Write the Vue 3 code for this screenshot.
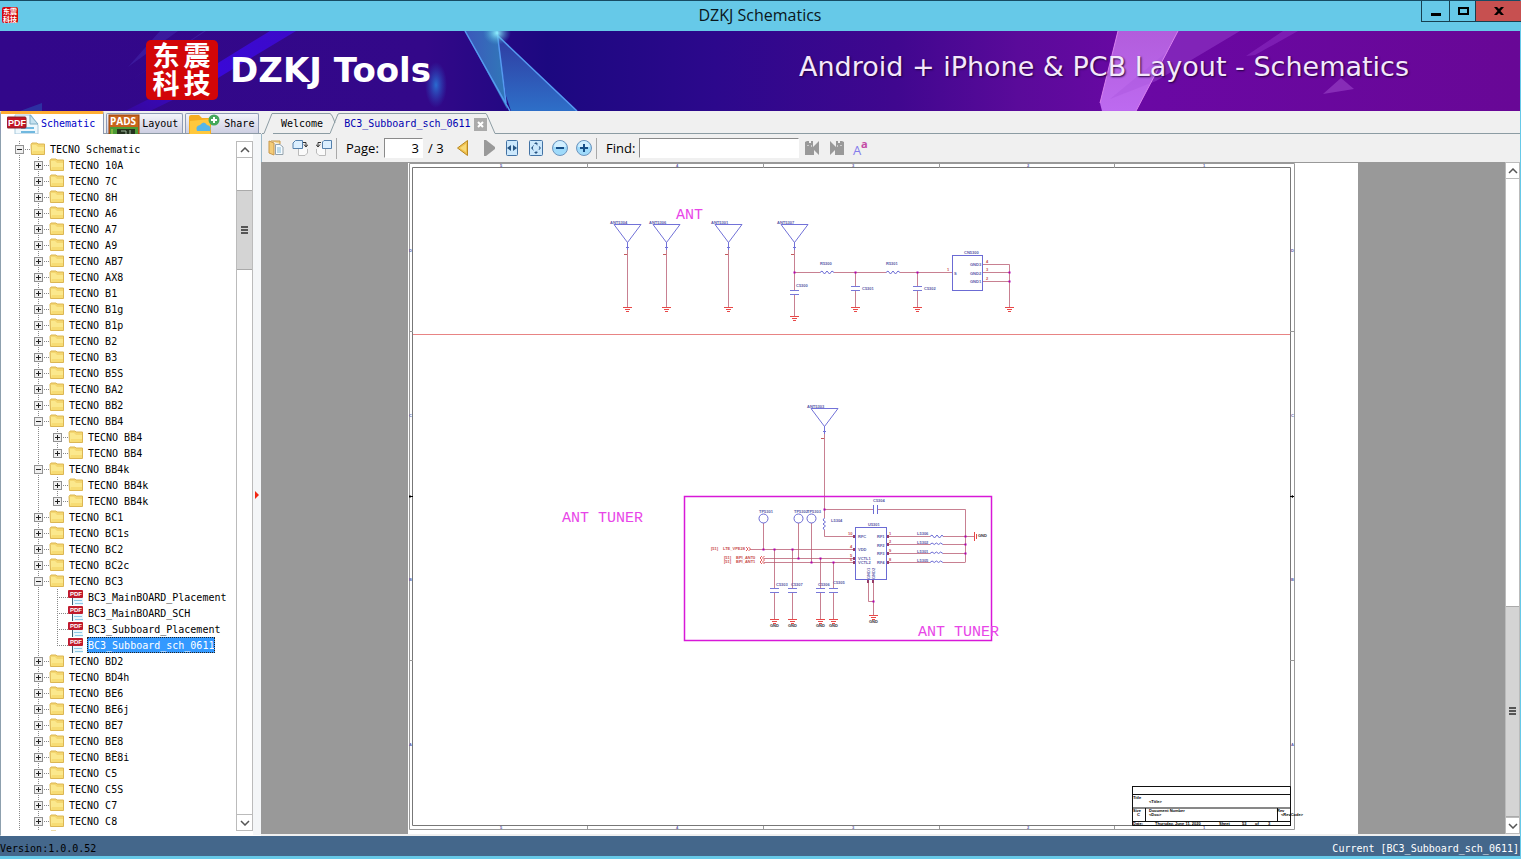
<script setup>
import { ref, computed } from 'vue'

const folders = [
  '10A', '7C', '8H', 'A6', 'A7', 'A9', 'AB7', 'AX8', 'B1', 'B1g', 'B1p', 'B2', 'B3', 'B5S', 'BA2', 'BB2',
  'BB4', 'BB4k', 'BC1', 'BC1s', 'BC2', 'BC2c', 'BC3', 'BD2', 'BD4h', 'BE6', 'BE6j', 'BE7', 'BE8', 'BE8i',
  'C5', 'C5S', 'C7', 'C8',
]
const children = {
  BB4: [{ name: 'TECNO BB4' }, { name: 'TECNO BB4' }],
  BB4k: [{ name: 'TECNO BB4k' }, { name: 'TECNO BB4k' }],
  BC3: [
    { name: 'BC3_MainBOARD_Placement', pdf: true },
    { name: 'BC3_MainBOARD_SCH', pdf: true },
    { name: 'BC3_Subboard_Placement', pdf: true },
    { name: 'BC3_Subboard_sch_0611', pdf: true },
  ],
}
const open = ref({ root: true, BB4: true, BB4k: true, BC3: true })
const selected = ref('BC3_Subboard_sch_0611')

const rows = computed(() => {
  const out = [{ id: 'root', name: 'TECNO Schematic', depth: 0 }]
  if (!open.value.root) return out
  for (const f of folders) {
    out.push({ id: f, name: 'TECNO ' + f, depth: 1 })
    if (open.value[f] && children[f]) {
      children[f].forEach((c, i) =>
        out.push({ id: f + '-' + i, ...c, depth: 2, last: i === children[f].length - 1 }))
    }
  }
  out.push({ id: 'next', name: '', depth: 1 })
  return out
})
function toggle(id) {
  open.value[id] = !open.value[id]
}

const page = ref('3')
const query = ref('')

const antennas = [
  { x: 627, y: 224, label: 'ANT5304' }, { x: 666, y: 224, label: 'ANT5306' },
  { x: 728, y: 224, label: 'ANT5301' }, { x: 794, y: 224, label: 'ANT5307' },
  { x: 824, y: 408, label: 'ANT5303' },
]
const grounds = [
  [627, 307], [666, 307], [728, 307], [794, 316], [855, 307], [917, 307], [1009, 307],
  [774, 619], [792, 619], [820, 619], [833, 619], [873, 615],
]
const caps = [[794, 290], [855, 286], [917, 286], [774, 588], [792, 588], [820, 588], [833, 588]]
const wires = [
  'M627.5 250V307M666.5 250V307M728.5 250V307M794.5 250V290M794.5 294V316',
  'M794.5 272.5H820M834 272.5H886M900 272.5H952M855.5 272.5V286M855.5 290V307M917.5 272.5V286M917.5 290V307',
  'M983 264.5H1009.5V307M983 272.5H1009.5M983 281.5H1009.5',
  'M824.5 434V518M824.5 530V536.5H855M824.5 509.5H873M878 509.5H965.5V562.5',
  'M750 549.5H855M764 558.5H855M764 562.5H855M763.5 523V549M798.5 523V558M811.5 523V562',
  'M774.5 549.5V588M792.5 549.5V588M820.5 558.5V588M833.5 562.5V588',
  'M774.5 593V619M792.5 593V619M820.5 593V619M833.5 593V619',
  'M887 536.5H930M887 544.5H930M887 553.5H930M887 562.5H930M943 536.5H974M943 544.5H965M943 553.5H965M943 562.5H965',
  'M868.5 580V601.5H873.5M873.5 580V615',
]
const dots = [
  [794, 272], [855, 272], [917, 272], [1009, 272], [1009, 281], [824, 509], [763, 549], [774, 549], [792, 549],
  [798, 558], [811, 562], [820, 558], [833, 562], [965, 536], [965, 544], [965, 553], [873, 601],
]
const testPoints = [[763, 'TP5301', 759], [798, 'TP5302', 794], [811, 'TP5303', 807]]
const blueLabels = [
  [820, 265, 'R5300'], [886, 265, 'R5301'], [796, 287, 'C5300'], [862, 290, 'C5301'], [924, 290, 'C5302'],
  [964, 254, 'CN5300'], [954, 275, 'S'], [970, 266, 'GND3'], [970, 275, 'GND2'], [970, 283, 'GND1'],
  [873, 502, 'C5304'], [831, 522, 'L5304'], [868, 526, 'U5301'], [858, 538, 'RFC'], [858, 551, 'VDD'],
  [858, 560, 'VCTL1'], [858, 564, 'VCTL2'], [877, 538, 'RF1'], [877, 547, 'RF2'], [877, 555, 'RF3'],
  [877, 564, 'RF4'], [917, 535, 'L5306'], [917, 544, 'L5302'], [917, 553, 'L5301'], [917, 562, 'L5305'],
  [776, 586, 'C5303'], [791, 586, 'C5307'], [818, 586, 'C5306'], [833, 584, 'C5305'],
]
const redLabels = [
  [947, 271, '1'], [986, 263, '4'], [986, 271, '3'], [986, 280, '2'], [848, 535, '10'], [850, 548, '4'],
  [850, 557, '5'], [850, 561, '6'], [889, 535, '1'], [889, 543, '2'], [889, 552, '9'], [889, 561, '8'],
  [711, 550, '[51]'], [723, 550, 'LTE_VPE28'], [724, 559, '[51]'], [736, 559, 'BPI_ANT0'],
  [724, 563, '[51]'], [736, 563, 'BPI_ANT1'],
]
const gndLabels = [[770, 627], [788, 627], [816, 627], [829, 627], [869, 623], [978, 537]]
const titleLabels = [
  [1133, 799, 'Title'], [1149, 803, '<Title>'], [1133, 812, 'Size'], [1137, 816, 'C'],
  [1149, 812, 'Document Number'], [1149, 816, '<Doc>'], [1277, 812, 'Rev'], [1281, 816, '<RevCode>'],
  [1133, 825, 'Date:'], [1155, 825, 'Thursday, June 11, 2020'], [1219, 825, 'Sheet'],
  [1242, 825, '53'], [1255, 825, 'of'], [1268, 825, '3'],
]
const columns = [[500, 5], [676, 4], [852, 3], [1027, 2], [1203, 1]]
const bands = [[252, 'D'], [417, 'C'], [581, 'B'], [746, 'A']]
</script>

<template>
  <div class="window">
    <header class="titlebar">
      <div class="app-icon" aria-hidden="true"><span>东震</span><span>科技</span></div>
      <h1>DZKJ Schematics</h1>
      <div class="win-buttons">
        <button type="button" class="min" aria-label="Minimize">
          <svg width="12" height="12" viewBox="0 0 12 12"><path d="M1 8h10v3H1z" /></svg>
        </button>
        <button type="button" class="max" aria-label="Maximize">
          <svg width="12" height="12" viewBox="0 0 12 12"><path d="M2 3h9v6H2z" fill="none" stroke="#000" stroke-width="2" /></svg>
        </button>
        <button type="button" class="close" aria-label="Close">
          <svg width="12" height="12" viewBox="0 0 12 12"><path d="M1 2h3l2 2 2-2h3L7.500 6 11 10H8L6 8l-2 2H1l3.500-4z" /></svg>
        </button>
      </div>
    </header>

    <section class="banner">
      <svg class="backdrop" viewBox="0 0 1520 80" preserveAspectRatio="none" aria-hidden="true">
        <defs>
          <linearGradient id="sky">
            <stop offset="0" stop-color="#32078a" /><stop offset=".28" stop-color="#330889" />
            <stop offset=".36" stop-color="#1c0880" /><stop offset=".47" stop-color="#2c088c" />
            <stop offset=".59" stop-color="#40078f" /><stop offset=".67" stop-color="#5a0a9a" />
            <stop offset=".75" stop-color="#6a08a4" /><stop offset="1" stop-color="#680796" />
          </linearGradient>
          <linearGradient id="shard" x1="0" y1="0" x2="0" y2="1">
            <stop offset="0" stop-color="#2f3aa0" /><stop offset="1" stop-color="#2e6fc8" />
          </linearGradient>
          <linearGradient id="shardLeft" x1="0" y1="0" x2="1" y2="0">
            <stop offset="0" stop-color="#3c58bb" /><stop offset="1" stop-color="#3079b8" />
          </linearGradient>
          <linearGradient id="prism" x1="0" y1="0" x2="0" y2="1">
            <stop offset="0" stop-color="#b25ddc" /><stop offset="1" stop-color="#bd6af0" />
          </linearGradient>
          <linearGradient id="beam" x1="1" y1="0" x2="0" y2="1">
            <stop offset="0" stop-color="#3d0ad0" /><stop offset=".5" stop-color="#3a08e0" />
            <stop offset="1" stop-color="#3708a0" />
          </linearGradient>
          <radialGradient id="glow"><stop offset="0" stop-color="#2a6bd0" /><stop offset="1" stop-color="#2a50c0" stop-opacity="0" /></radialGradient>
          <radialGradient id="spark"><stop offset="0" stop-color="#8ff0ff" /><stop offset="1" stop-color="#40a0d0" stop-opacity="0" /></radialGradient>
        </defs>
        <rect width="1520" height="80" fill="url(#sky)" />
        <path d="M270 0H296L218 47L150 80H125L205 40Z" fill="url(#beam)" opacity=".9" />
        <path d="M160 0H178L128 36ZM204 0H206L130 50Z" fill="#4b3ac0" opacity=".35" />
        <path d="M20 80L42 72V80Z" fill="#2757ba" opacity=".5" />
        <ellipse cx="436" cy="54" rx="11" ry="23" fill="url(#glow)" />
        <path d="M465 0H497L507 78Z" fill="url(#shardLeft)" />
        <path d="M497 4L577 80H511L506 65Z" fill="url(#shard)" />
        <path d="M465 0L510 80M497 0L506 72M497 4L577 80" stroke="#559af0" stroke-width="1.500" fill="none" />
        <ellipse cx="497" cy="2" rx="14" ry="12" fill="url(#spark)" />
        <path d="M1118 0H1178L1136 80H1102L1100 72Z" fill="url(#prism)" />
        <path d="M1178 0H1240L1156 50L1110 68L1168 20Z" fill="#a855dd" opacity=".38" />
        <path d="M1283 0H1298L1255 24L1246 25Z" fill="#a94fe0" opacity=".3" />
        <path d="M1118 0L1100 72M1178 0L1136 80" stroke="#d982ef" fill="none" />
        <path d="M1323 63L1341 47L1354 58Z" fill="#913ac0" opacity=".75" />
      </svg>
      <div class="brand">
        <div class="seal"><span>东</span><span>震</span><span>科</span><span>技</span></div>
        <strong>DZKJ Tools</strong>
      </div>
      <p class="slogan">Android + iPhone &amp; PCB Layout - Schematics</p>
    </section>

    <main class="workspace">
      <aside class="side">
        <nav class="side-tabs" aria-label="Sources">
          <button type="button" class="tab active">
            <svg width="32" height="20" viewBox="0 0 32 20">
              <path d="M8 1H24L31 11V20H8Z" fill="#eef8fd" stroke="#a8c9dc" />
              <path d="M23 1V10H31Z" fill="#c5e2f0" stroke="#7faec6" />
              <path d="M14 14H27M14 18H28" stroke="#70b8df" stroke-width="2" />
              <rect y="3" width="19" height="11" rx="1" fill="#c41425" stroke="#83202b" />
              <text x="1" y="12" class="pdf-big">PDF</text>
            </svg>
            <span>Schematic</span>
          </button>
          <button type="button" class="tab">
            <svg width="32" height="20" viewBox="0 0 32 20">
              <rect x="1" y="1" width="30" height="19" fill="#c8641c" stroke="#9a430a" />
              <text x="2" y="11" class="pads">PADS</text>
              <path d="M2 13H30V20H2Z" fill="#4c9a35" />
              <path d="M9 15H27V20H9Z" fill="#24321f" /><path d="M13 17H18V20M22 16V20" stroke="#9eb69d" fill="none" />
              <path d="M4 15V20" stroke="#b7d64f" />
            </svg>
            <span>Layout</span>
          </button>
          <button type="button" class="tab share">
            <svg width="32" height="20" viewBox="0 0 32 20">
              <path d="M1 3Q1 1 3 1H11L14 4H23V20H1Z" fill="#f5ad20" />
              <path d="M2 7L22 5V20H2Z" fill="#ffc83d" />
              <path d="M9 17Q7 12 12 11Q16 6 19 11Q24 12 22 17Z" fill="#55b6e9" />
              <circle cx="26" cy="6" r="5.500" fill="#44a85a" /><path d="M26 3V9M23 6H29" stroke="#fff" stroke-width="2" />
            </svg>
            <span>Share</span>
          </button>
        </nav>
        <div class="tree-panel">
          <ul class="tree" role="tree" aria-label="Schematics">
            <li v-for="row in rows" :key="row.id" role="treeitem" :aria-selected="row.name === selected">
              <i v-for="n in row.depth" :key="n" class="guide"></i>
              <span class="node" :class="{ last: row.last }">
                <button v-if="!row.pdf" type="button" class="expander" :aria-label="'Toggle ' + row.name" @click="toggle(row.id)">
                  <svg width="9" height="9" viewBox="0 0 9 9">
                    <rect x=".5" y=".5" width="8" height="8" fill="#f0f0f0" stroke="#919191" />
                    <path :d="open[row.id] ? 'M2 4.500H7' : 'M2 4.500H7M4.500 2V7'" stroke="#222" />
                  </svg>
                </button>
              </span>
              <svg v-if="row.pdf" class="icon" width="16" height="16" viewBox="0 0 16 16">
                <path d="M4 1H12L15 4V16H4Z" fill="#e9f6fc" /><path d="M4.500 9V16" stroke="#3a5a70" />
                <path d="M6 11.500H14M7 14.500H15" stroke="#8cc8e6" />
                <rect y="1" width="15" height="8" rx="1" fill="#c01a2b" />
                <text x="2" y="7" class="pdf-small">PDF</text>
              </svg>
              <svg v-else class="icon" width="16" height="16" viewBox="0 0 16 16">
                <path d="M1 3.500L2 2H7L8 3H14.500V13.500H1.500Z" fill="#f4d771" stroke="#dcb653" />
                <path d="M2 4H6L8 6H14V13H2Z" fill="#fbe88d" /><path d="M3 10H14V13H2Z" fill="#f7dc74" />
              </svg>
              <a v-if="row.name" href="#" class="label" :class="{ selected: row.name === selected }" @click.prevent="selected = row.name">{{ row.name }}</a>
            </li>
          </ul>
          <div class="scroll side-scroll" aria-hidden="true">
            <div class="arrow"><svg width="10" height="6" viewBox="0 0 10 6"><path d="M1 5L5 1L9 5" fill="none" stroke="#555" stroke-width="1.500" /></svg></div>
            <div class="before"></div><div class="thumb"><i></i></div><div class="after"></div>
            <div class="arrow down"><svg width="10" height="6" viewBox="0 0 10 6"><path d="M1 1L5 5L9 1" fill="none" stroke="#555" stroke-width="1.500" /></svg></div>
          </div>
          <button type="button" class="splitter" aria-label="Collapse panel">
            <svg width="6" height="10" viewBox="0 0 6 10"><path d="M1 1L5 5L1 9Z" fill="#f22613" /></svg>
          </button>
        </div>
      </aside>

      <section class="viewer">
        <nav class="doc-tabs" aria-label="Documents">
          <svg width="11" height="23" viewBox="0 0 11 23"><path d="M0 22.500H2L10 2.500H11" /></svg>
          <button type="button" class="doc">Welcome</button>
          <svg width="10" height="23" viewBox="0 0 10 23"><path d="M0 2.500Q2 3 5 12M0 22.500L8 3Q9 2.500 10 2.500" /></svg>
          <button type="button" class="doc current">BC3_Subboard_sch_0611</button>
          <button type="button" class="doc-close" aria-label="Close document">
            <svg width="13" height="13" viewBox="0 0 13 13"><rect width="13" height="13" fill="#aaa" /><path class="x" d="M4 4L9 9M9 4L4 9" /></svg>
          </button>
          <svg width="12" height="23" viewBox="0 0 12 23"><path d="M0 2.500L1 4L9 22.500H12" /></svg>
          <i class="rest"></i>
        </nav>

        <div class="toolbar">
          <button type="button" aria-label="Copy"><svg width="16" height="16" viewBox="0 0 16 16">
            <path d="M1 1L6 3V15L1 13Z" fill="#f4cc78" stroke="#c9984b" /><path d="M3 1H12V4" fill="#f5d68d" stroke="#c9984b" />
            <path d="M7.500 4.500H12L15 7V14.500H7.500Z" fill="#f5fbff" stroke="#94a2ac" /><path d="M9 8H13M9 10H13M9 12H13" stroke="#82b7d5" />
          </svg></button>
          <button type="button" aria-label="Rotate right"><svg width="16" height="16" viewBox="0 0 16 16">
            <path d="M6.500 6V15.500H13L15.500 13V9" fill="#fafafa" stroke="#bbb" />
            <path d="M1 3L3.500 .5H10.500V8.500H1Z" fill="#dbefff" stroke="#5580ac" />
            <path d="M11 2.500H14V6M12 4.500L14 7L16 4.500" fill="none" stroke="#303030" />
          </svg></button>
          <button type="button" aria-label="Rotate left"><svg width="16" height="16" viewBox="0 0 16 16">
            <path d="M9.500 6V15.500H3L.5 13V9" fill="#fafafa" stroke="#bbb" />
            <path d="M6.500 2L8 .5H15.500V8.500H6.500Z" fill="#dbefff" stroke="#5580ac" />
            <path d="M5 2.500H2V6M0 4.500L2 7L4 4.500" fill="none" stroke="#303030" />
          </svg></button>
          <i class="sep"></i>
          <label for="page" class="page-label">Page:</label>
          <input id="page" v-model="page" class="page-input" type="text">
          <span class="total">/ 3</span>
          <button type="button" aria-label="Previous page"><svg width="16" height="16" viewBox="0 0 16 16"><path d="M12.500 .5V15.500L2.500 8Z" fill="#efc04e" stroke="#b98821" /><path d="M11 4V12L5 8Z" fill="#f8da79" /></svg></button>
          <button type="button" class="next" aria-label="Next page"><svg width="16" height="16" viewBox="0 0 16 16"><path d="M4 0H6L15 7V9L6 16H4Z" fill="#999" /></svg></button>
          <button type="button" aria-label="Fit width"><svg width="16" height="16" viewBox="0 0 16 16"><rect x="2.500" y=".5" width="11" height="15" rx="1" fill="#cce8fc" stroke="#4272a4" /><path d="M7 5V11L3 8ZM9 5V11L13 8Z" fill="#285582" /></svg></button>
          <button type="button" aria-label="Fit page"><svg width="16" height="16" viewBox="0 0 16 16"><rect x="1.500" y=".5" width="13" height="15" rx="1" fill="#cce8fc" stroke="#4272a4" /><path d="M8 2L10 4H6ZM8 14L10 12H6ZM3 8L5 6V10ZM13 8L11 6V10Z" fill="#285582" /><circle cx="8" cy="8" r="3.500" fill="none" stroke="#5b84b0" stroke-dasharray="2 2" /></svg></button>
          <button type="button" aria-label="Zoom out"><svg width="16" height="16" viewBox="0 0 16 16"><circle cx="8" cy="8" r="7.500" fill="#9fdafa" stroke="#6d94bd" /><path d="M2 7A6 6 0 0 1 14 7Z" fill="#d2efff" /><path d="M4 8H12" stroke="#164f88" stroke-width="2" /></svg></button>
          <button type="button" aria-label="Zoom in"><svg width="16" height="16" viewBox="0 0 16 16"><circle cx="8" cy="8" r="7.500" fill="#9fdafa" stroke="#6d94bd" /><path d="M2 7A6 6 0 0 1 14 7Z" fill="#d2efff" /><path d="M4 8H12M8 4V12" stroke="#164f88" stroke-width="2" /></svg></button>
          <i class="sep"></i>
          <label for="find" class="find-label">Find:</label>
          <input id="find" v-model="query" class="find-input" type="text">
          <button type="button" class="find-btn" aria-label="Find previous"><svg width="16" height="16" viewBox="0 0 16 16"><path d="M1 2L3 1H5V3H7V1H9V7L15 1V15L10 10V15H1Z" fill="#999" /><path d="M3 5.500H5M7.500 5V7" stroke="#ccc" /></svg></button>
          <button type="button" class="find-btn" aria-label="Find next"><svg width="16" height="16" viewBox="0 0 16 16"><path d="M1 1L7 7V1H9V3H11V1H13L15 2V15H6V10L1 15Z" fill="#999" /><path d="M11 5.500H13M8.500 5V7" stroke="#ccc" /></svg></button>
          <button type="button" aria-label="Match case"><svg width="20" height="24" viewBox="0 0 20 24"><text x="2" y="19" class="case-a">A</text><text x="10" y="12" class="case-b">a</text></svg></button>
        </div>

        <div class="stage">
          <svg class="sheet" viewBox="262 162 1243 672" role="img" aria-label="BC3_Subboard_sch_0611, page 3">
            <rect x="408" y="163" width="950" height="671" fill="#fff" />
            <g fill="none" stroke="#999">
              <path d="M409.500 163.500H1294.500V829.500H409.500Z" />
              <path d="M412.500 167.500H1290.500V825.500H412.500Z" stroke="#777" />
              <path d="M587.500 163V168M763.500 163V168M939.500 163V168M1114.500 163V168M587.500 826V830M763.500 826V830M939.500 826V830M1114.500 826V830" />
              <path d="M409 331.500H413M409 660.500H413M1290 331.500H1295M1290 660.500H1295" />
            </g>
            <path d="M409 496.500H413M1290 496.500H1294" stroke="#000" />
            <path d="M412 496.500L409.500 495V498ZM1290.500 496.500L1293 495V498Z" />
            <g class="tiny gray">
              <template v-for="c in columns" :key="c[0]"><text :x="c[0]" y="167">{{ c[1] }}</text><text :x="c[0]" y="829">{{ c[1] }}</text></template>
              <template v-for="b in bands" :key="b[0]"><text x="409" :y="b[0]">{{ b[1] }}</text><text x="1291" :y="b[0]">{{ b[1] }}</text></template>
            </g>
            <path d="M413 334.500H1290" stroke="#e88484" />

            <g fill="none" stroke="#b5566c"><path v-for="w in wires" :key="w" :d="w" opacity=".75" /></g>
            <g v-for="a in antennas" :key="a.label">
              <path :d="`M${a.x - 13} ${a.y + .5}h27l-13.500 18zM${a.x + .5} ${a.y + 18}v8m-1.500 -2.500h3`" fill="none" stroke="#7272d8" />
              <path :d="`M${a.x - 3} ${a.y + 30.500}h3`" stroke="#c45b5b" />
              <text class="tiny" :x="a.x - 17" :y="a.y">{{ a.label }}</text>
            </g>
            <path v-for="g in grounds" :key="g.join()" :d="`M${g[0] - 4} ${g[1] + .5}h9m-7 2h5m-4 2h3`" stroke="#e84848" fill="none" />
            <path d="M974.500 532V541M976.500 534V539" stroke="#e84848" />
            <path v-for="c in caps" :key="c.join()" :d="`M${c[0] - 4} ${c[1] + .5}h9m-9 4h9`" stroke="#7878d8" fill="none" />
            <g fill="none" stroke="#6b6bd4">
              <path d="M873.500 505V514M877.500 505V514" />
              <path d="M820 272.500l2-1.500 2.500 3 2.500-3 2.500 3 2.500-3 2 1.500M886 272.500l2-1.500 2.500 3 2.500-3 2.500 3 2.500-3 2 1.500" />
              <path d="M824.500 518l-1.500 2 2.500 2-2.500 2 2.500 2-2.500 2 1.500 2" />
              <path v-for="y in [544, 553, 562]" :key="y" :d="`M930 ${y + .5}q2-3 4.300 0q2-3 4.300 0q2-3 4.300 0`" />
              <path d="M930 536.500l2-1.500 2.500 3 2.500-3 2.500 3 2.500-3 1 1.500" />
              <rect x="952.500" y="255.500" width="30" height="35" /><rect x="855.500" y="527.500" width="31" height="52" />
            </g>
            <g v-for="t in testPoints" :key="t[1]">
              <circle :cx="t[0] + .5" cy="518.500" r="4.500" fill="#fff" stroke="#6b6bd4" /><text class="tiny" :x="t[2]" y="513">{{ t[1] }}</text>
            </g>
            <rect v-for="d in dots" :key="d.join()" :x="d[0] - .5" :y="d[1] - .5" width="2" height="2" fill="#b000b0" />
            <path d="M746 547l2 2-2 2M748.500 547l2 2-2 2M762 556l-2 2 2 2M764.500 556l-2 2 2 2M762 560l-2 2 2 2M764.500 560l-2 2 2 2" fill="none" stroke="#e25c5c" />
            <path d="M853 535h2v3h-2zM853 548h2v3h-2zM853 557h2v3h-2zM853 561h2v3h-2zM887 535h2v3h-2zM887 543h2v3h-2zM887 552h2v3h-2zM887 561h2v3h-2zM867 580h2v3h-2zM872 580h2v3h-2z" fill="#963c68" />
            <text v-for="l in blueLabels" :key="l.join()" class="tiny" :x="l[0]" :y="l[1]">{{ l[2] }}</text>
            <text class="tiny" transform="translate(870 579) rotate(-90)">GND1</text>
            <text class="tiny" transform="translate(875 579) rotate(-90)">GND2</text>
            <g class="red"><text v-for="l in redLabels" :key="l.join()" class="tiny" :x="l[0]" :y="l[1]">{{ l[2] }}</text></g>
            <g class="dark"><text v-for="l in gndLabels" :key="l.join()" class="tiny" :x="l[0]" :y="l[1]">GND</text></g>

            <rect x="684.500" y="496.500" width="307" height="144" fill="none" stroke="#d818d8" stroke-width="1.500" />
            <g class="note"><text x="676" y="219">ANT</text><text x="562" y="522">ANT TUNER</text><text x="918" y="636">ANT TUNER</text></g>

            <path d="M1132.500 786.500H1290.500V825M1132.500 786V825.500H1291M1132 794.500H1291M1132 808H1291M1132 821.500H1291M1145.500 808V821M1277.500 808V821" fill="none" stroke="#111" />
            <g class="block"><text v-for="l in titleLabels" :key="l.join()" class="tiny" :x="l[0]" :y="l[1]">{{ l[2] }}</text></g>
          </svg>
          <div class="scroll stage-scroll" aria-hidden="true">
            <div class="arrow"><svg width="10" height="6" viewBox="0 0 10 6"><path d="M1 5L5 1L9 5" fill="none" stroke="#555" stroke-width="1.500" /></svg></div>
            <div class="before"></div><div class="thumb"><i></i></div>
            <div class="arrow down"><svg width="10" height="6" viewBox="0 0 10 6"><path d="M1 1L5 5L9 1" fill="none" stroke="#555" stroke-width="1.500" /></svg></div>
          </div>
        </div>
      </section>
    </main>

    <footer class="status"><span>Version:1.0.0.52</span><span class="current-doc">Current [BC3_Subboard_sch_0611]</span></footer>
  </div>
</template>

<style>
html, body { margin: 0; overflow: hidden; }
</style>

<style scoped>
.window {
  --mono: "DejaVu Sans Mono", "Liberation Mono", monospace;
  --ui: "Open Sans", "Noto Sans", sans-serif;
  box-sizing: border-box;
  height: 100vh;
  display: flex;
  flex-direction: column;
  border-top: 1px solid #174b63;
  border-right: 1px solid #66c9e8;
  border-bottom: 3px solid #66c9e8;
  background: #f0f0f0;
  color: #000;
  font: 10px/16px var(--mono);
}
button { padding: 0; border: 0; background: none; font: inherit; color: inherit; }
svg { display: block; flex: none; }

.titlebar {
  display: grid;
  grid-template-columns: 1fr auto 1fr;
  height: 30px;
  flex: none;
  background: #66c9e8;
}
.app-icon {
  width: 16px;
  height: 16px;
  margin: 6px 2px;
  border-radius: 2px;
  background: #d4090d;
  color: #fff;
  font: 700 7px/8px "Noto Sans CJK SC", sans-serif;
  text-align: center;
}
.app-icon span { display: block; }
h1 { margin: 0; font: 400 16px/28px var(--ui); color: #0a161b; }
.win-buttons { justify-self: end; display: flex; height: 21px; margin-right: -1px; }
.win-buttons button {
  box-sizing: border-box;
  display: grid;
  place-items: center;
  border: 1px solid #173f50;
  border-width: 0 0 1px 1px;
}
.min { width: 28px; }
.max { width: 26px; }
.win-buttons .close { width: 46px; background: #c75050; }

.banner { position: relative; flex: none; height: 80px; display: flex; align-items: center; color: #fff; }
.backdrop { position: absolute; inset: 0; width: 100%; height: 100%; }
.brand { position: relative; display: flex; align-items: center; gap: 12px; margin-left: 146px; padding-bottom: 2px; }
.seal {
  box-sizing: border-box;
  display: grid;
  grid-template-columns: 28px 28px;
  justify-content: center;
  column-gap: 3px;
  width: 72px;
  height: 60px;
  padding: 1px 0 3px;
  border-radius: 5px;
  background: #d20608;
  font: 700 27px/28px "Noto Sans CJK SC", sans-serif;
}
.brand strong { font: 700 34px/44px "DejaVu Sans", sans-serif; }
.slogan {
  position: relative;
  margin: 0 111px 8px auto;
  font: 400 27px/36px "DejaVu Sans", sans-serif;
  color: #f4e8fb;
  text-shadow: 1px 1px 2px #21003d;
  white-space: nowrap;
}

.workspace { flex: 1; min-height: 0; display: flex; }
.side { width: 261px; flex: none; display: flex; flex-direction: column; }
.side-tabs { display: flex; align-items: flex-end; height: 23px; flex: none; gap: 2px; border-bottom: 1px solid #8e9ba6; box-sizing: border-box; }
.tab {
  box-sizing: border-box;
  display: flex;
  align-items: center;
  gap: 2px;
  height: 20px;
  padding: 0 4px 0 1px;
  border: 1px solid #8e9bb5;
  border-bottom: 0;
  border-radius: 2px 2px 0 0;
  background: linear-gradient(#f4f4fa, #cdcfe2);
}
.tab.active { height: 23px; margin-bottom: -1px; padding: 0 8px 0 6px; border-top: 3px solid #ffad32; background: #fff; color: #0000c8; }
.tab.share { gap: 4px; padding-left: 2px; }
.tree-panel { flex: 1; min-height: 0; display: flex; background: #fff; border-left: 1px solid #8da0ae; border-bottom: 1px solid #fff; }
.tree { flex: 1; min-width: 0; margin: 6px 0 4px; padding: 1px 0 0 9px; list-style: none; overflow: hidden; }
.tree li { display: flex; align-items: center; height: 16px; }
.guide, .node {
  position: relative;
  flex: none;
  width: 19px;
  height: 16px;
  background: repeating-linear-gradient(#888 0 1px, transparent 1px 2px) 9px 0 / 1px 100% no-repeat;
}
.node { display: flex; align-items: center; padding-right: 2px; }
.node::before {
  content: "";
  position: absolute;
  left: 9px;
  right: 0;
  top: 8px;
  height: 1px;
  background: repeating-linear-gradient(90deg, #888 0 1px, transparent 1px 2px);
}
.node.last { background-size: 1px 9px; }
.expander { position: relative; margin-left: 5px; }
.icon { margin: 0 3px 0 -1px; }
.label { padding: 1px 1px 0; line-height: 15px; color: #000; text-decoration: none; white-space: nowrap; }
.label.selected { background: #3399ff; color: #fff; outline: 1px dotted #222; outline-offset: -1px; }
.pdf-big { font: 700 9px "Liberation Sans", sans-serif; fill: #fff; }
.pads { font: 700 10px "Open Sans", sans-serif; fill: #fff; }
.pdf-small { font: 700 6px "Liberation Sans", sans-serif; fill: #fff; }

.scroll { box-sizing: border-box; flex: none; display: flex; flex-direction: column; width: 17px; background: #fff; border: 1px solid #bbb; }
.side-scroll { margin: 7px 0 4px; }
.arrow { display: grid; place-items: center; height: 15px; flex: none; border-bottom: 1px solid #bbb; }
.arrow.down { border-bottom: 0; border-top: 1px solid #bbb; }
.thumb { display: grid; place-items: center; background: #d4d4d4; border: solid #aaa; border-width: 1px 0; }
.thumb i { width: 7px; height: 8px; background: repeating-linear-gradient(#555 0 2px, transparent 2px 3px); }
.side-scroll .before { flex: 32; }
.side-scroll .thumb { flex: 78; }
.side-scroll .after { flex: 546; }
.splitter { width: 8px; padding: 20px 0 0 1px; background: #f4f6f8; }

.viewer { flex: 1; min-width: 0; display: flex; flex-direction: column; }
.doc-tabs { display: flex; height: 23px; flex: none; }
.doc-tabs svg path { fill: none; stroke: #8c9ca3; }
.doc { box-sizing: border-box; border: solid #8c9ca3; border-width: 1px 0; margin-top: 2px; padding: 1px 7px 0 8px; }
.doc-tabs > svg:first-child { margin-left: 1px; }
.doc.current { border-bottom-color: transparent; color: #0000b0; padding: 1px 3px 0 4px; }
.doc-close { box-sizing: border-box; width: 12px; margin-top: 2px; border-top: 1px solid #8c9ca3; display: grid; place-items: center; }
.doc-tabs svg path.x { stroke: #fff; stroke-width: 2; }
.rest { flex: 1; border-bottom: 1px solid #8c9ca3; }
.toolbar {
  box-sizing: border-box;
  display: flex;
  align-items: center;
  height: 28px;
  flex: none;
  padding-left: 2px;
  border-left: 1px solid #9bb7c6;
  font: 13px/20px var(--ui);
}
.toolbar button { width: 24px; height: 24px; display: grid; place-items: center; }
.toolbar .next { width: 25px; }
.sep { width: 1px; height: 21px; background: #a9a9a9; }
.page-label, .find-label { padding-left: 9px; }
.page-label { width: 38px; }
.find-label { width: 33px; }
.toolbar input {
  box-sizing: border-box;
  height: 20px;
  padding: 0 3px;
  border: 1px solid #8a8a8a;
  border-color: #8a8a8a #fff #fff #8a8a8a;
  border-radius: 0;
  background: #fff;
  font: inherit;
  outline: 0;
}
.page-input { width: 39px; text-align: right; }
.find-input { width: 160px; }
.toolbar .find-btn { width: 25px; }
.total { width: 28px; padding-left: 5px; box-sizing: border-box; }
.case-a { font: 13px "Open Sans", sans-serif; fill: #847cec; }
.case-b { font: 700 11px "Open Sans", sans-serif; fill: #c44ba5; }

.stage { flex: 1; min-height: 0; display: flex; padding-left: 1px; margin-bottom: 2px; background: #999; }
.sheet { flex: 1; min-width: 0; width: 100%; height: 100%; }
.stage-scroll { width: 15px; }
.stage-scroll .before { flex: 430; }
.stage-scroll .thumb { flex: 211; }
.tiny { font: 700 4px "Liberation Sans", sans-serif; fill: #5a5aa8; }
.gray .tiny { fill: #666; }
.red .tiny { fill: #c84d4d; }
.dark .tiny { fill: #333; }
.block .tiny { fill: #000; }
.note { font: 15px "Liberation Mono", monospace; fill: #e845e8; }

.status { display: flex; justify-content: space-between; align-items: center; flex: none; height: 20px; padding-top: 1px; box-sizing: border-box; background: #44678b; }
.status span { line-height: 19px; padding-top: 3px; }
.current-doc { color: #fff; padding-right: 1px; }
</style>
